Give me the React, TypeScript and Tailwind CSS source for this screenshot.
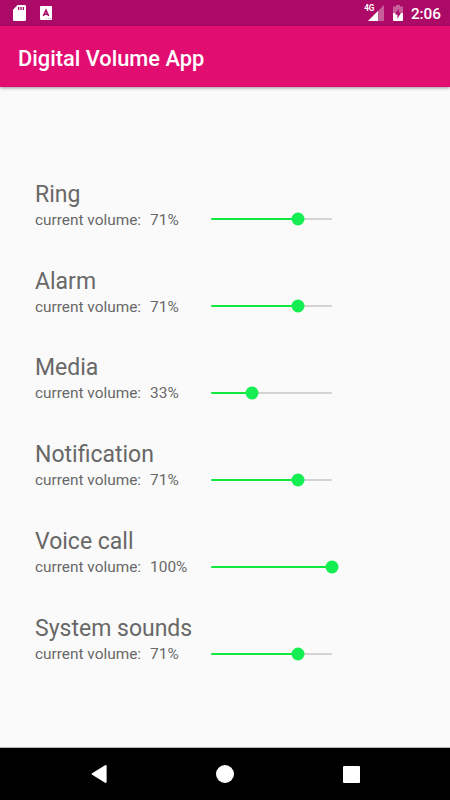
import React from 'react';

type Volume = { name: string; percent: number; position: number };

const volumes: Volume[] = [
  { name: 'Ring', percent: 71, position: 71.4 },
  { name: 'Alarm', percent: 71, position: 71.4 },
  { name: 'Media', percent: 33, position: 33.3 },
  { name: 'Notification', percent: 71, position: 71.4 },
  { name: 'Voice call', percent: 100, position: 100 },
  { name: 'System sounds', percent: 71, position: 71.4 },
];

function StatusBar() {
  return (
    <div className="flex h-[26px] shrink-0 items-center bg-[#ab0a66] text-white">
      <svg className="ml-[13px]" width="13" height="16" viewBox="0 0 13 16">
        <path fill="#fff" d="M4.6 0H11.8Q13 0 13 1.2V14.8Q13 16 11.8 16H1.2Q0 16 0 14.8V4.8Z" />
        <path stroke="#ab0a66" strokeWidth="1.3" d="M5.6 2V5M8 2V5M10.4 2V5" />
      </svg>
      <svg className="ml-[14px]" width="12" height="14" viewBox="0 0 12 14">
        <rect width="12" height="14" rx="1" fill="#fff" />
        <path fill="none" stroke="#ab0a66" strokeWidth="1.6" d="M3.4 10L6 4.2L8.6 10M4.2 8.2H7.8" />
        <path stroke="#ab0a66" strokeOpacity=".35" d="M6 12.5H7M8 12.5H9M10 12.5H11" />
      </svg>
      <div className="ml-auto flex items-center">
        <span className="-mr-[6px] mb-[8px] origin-right scale-x-90 text-[9px] leading-none font-bold">4G</span>
        <svg width="16" height="16" viewBox="0 0 16 16">
          <path fill="#fff" fillOpacity=".35" d="M16 0V16H0Z" />
          <path fill="#fff" d="M10 6V16H0Z" />
        </svg>
        <svg className="ml-[9px]" width="10" height="16" viewBox="0 0 10 16">
          <path fill="#fff" fillOpacity=".35" d="M3 0H7V1.6H10V8H0V1.6H3Z" />
          <path fill="#fff" d="M0 8H10V15Q10 16 9 16H1Q0 16 0 15Z" />
          <path fill="#ab0a66" d="M5.7 3.5L1.8 9.6H4.4V13.8L8.2 7.6H5.7Z" />
        </svg>
        <span className="mt-[3px] mr-[9px] ml-[8px] text-[15.3px] leading-none font-medium">2:06</span>
      </div>
    </div>
  );
}

function VolumeSlider({ position }: { position: number }) {
  return (
    <div className="relative h-[2px] w-[121.1px] rounded-full bg-[#d3d3d3]">
      <div className="h-full rounded-full bg-[#10e83c]" style={{ width: `${position}%` }} />
      <div
        className="absolute top-1/2 size-[13px] -translate-x-1/2 -translate-y-1/2 rounded-full bg-[#15ee52]"
        style={{ left: `${position}%` }}
      />
    </div>
  );
}

function VolumeRow({ name, percent, position }: Volume) {
  return (
    <div className="h-[86.9px]">
      <h2 className="h-[28px] pt-[0.5px] text-[23px] leading-[28px] text-[#686868]">{name}</h2>
      <div className="flex h-[22px] items-center">
        <div className="flex w-[176.3px] gap-[9px] pt-[1px] text-[15.4px] leading-[22px] whitespace-nowrap text-[#686868]">
          <span>current volume:</span>
          <span>{percent}%</span>
        </div>
        <VolumeSlider position={position} />
      </div>
    </div>
  );
}

function NavBar() {
  return (
    <div className="flex h-[53px] shrink-0 items-center justify-between border-t border-[#b5b5b5] bg-black pr-[90px] pl-[91px]">
      <svg width="16" height="18" viewBox="0 0 17 18" preserveAspectRatio="none">
        <path fill="#fff" d="M1.2 8.2L15 .2Q16.6 -.4 16.6 1.2V16.8Q16.6 18.4 15 17.8L1.2 9.8Q0 9 1.2 8.2Z" />
      </svg>
      <div className="size-[18px] rounded-full bg-white" />
      <div className="size-[17px] rounded-[1px] bg-white" />
    </div>
  );
}

export default function App() {
  return (
    <div className="flex h-[800px] w-[450px] flex-col overflow-hidden bg-[#fafafa] font-['Roboto',sans-serif]">
      <StatusBar />
      <header className="flex h-[61px] shrink-0 items-center bg-[#e20d70] pt-[5px] pl-[18px] shadow-[0_1px_3px_rgba(0,0,0,0.4)]">
        <h1 className="text-[21.8px] leading-none font-medium text-white">Digital Volume App</h1>
      </header>
      <main className="flex-1 pt-[93.2px] pl-[35px]">
        {volumes.map((volume) => (
          <VolumeRow key={volume.name} {...volume} />
        ))}
      </main>
      <NavBar />
    </div>
  );
}
